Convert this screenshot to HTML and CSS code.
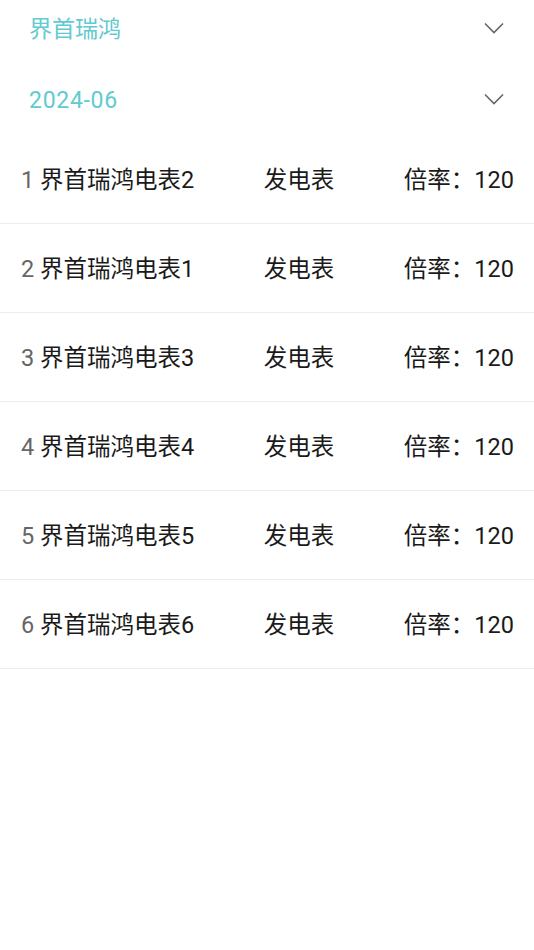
FILE: index.html
```html
<!DOCTYPE html>
<html lang="zh">
<head>
<meta charset="utf-8">
<link rel="stylesheet" href="styles.css">
</head>
<body>
<div class="page">
  <div class="filters">
    <div class="filter">
      <span class="filter-label">界首瑞鸿</span>
      <svg class="chev" width="20" height="12" viewBox="0 0 20 12"><path d="M1 1.5 L10 10.5 L19 1.5" fill="none" stroke="#666" stroke-width="1.6"/></svg>
    </div>
    <div class="filter">
      <span class="filter-label date">2024-06</span>
      <svg class="chev" width="20" height="12" viewBox="0 0 20 12"><path d="M1 1.5 L10 10.5 L19 1.5" fill="none" stroke="#666" stroke-width="1.6"/></svg>
    </div>
  </div>
  <ul class="list">
    <li class="row"><span class="name"><span class="idx">1</span> 界首瑞鸿电表2</span><span class="type">发电表</span><span class="rate">倍率：120</span></li>
    <li class="row"><span class="name"><span class="idx">2</span> 界首瑞鸿电表1</span><span class="type">发电表</span><span class="rate">倍率：120</span></li>
    <li class="row"><span class="name"><span class="idx">3</span> 界首瑞鸿电表3</span><span class="type">发电表</span><span class="rate">倍率：120</span></li>
    <li class="row"><span class="name"><span class="idx">4</span> 界首瑞鸿电表4</span><span class="type">发电表</span><span class="rate">倍率：120</span></li>
    <li class="row"><span class="name"><span class="idx">5</span> 界首瑞鸿电表5</span><span class="type">发电表</span><span class="rate">倍率：120</span></li>
    <li class="row"><span class="name"><span class="idx">6</span> 界首瑞鸿电表6</span><span class="type">发电表</span><span class="rate">倍率：120</span></li>
  </ul>
</div>
</body>
</html>
```
FILE: styles.css
```css
html, body {
  margin: 0;
  padding: 0;
  background: #fff;
}
body {
  font-family: Roboto, "Noto Sans CJK SC", sans-serif;
  color: #1a1a1a;
}
.page {
  width: 534px;
}
.filters {
  display: flex;
  flex-direction: column;
  gap: 15px;
}
.filter {
  box-sizing: border-box;
  height: 56px;
  display: flex;
  align-items: center;
  justify-content: space-between;
  padding: 0 30px 0 29px;
}
.filter-label {
  font-size: 23px;
  line-height: 30px;
  color: #62cad0;
  padding-top: 3px;
}
.date {
  letter-spacing: 0.7px;
}
.chev {
  display: block;
}
.list {
  list-style: none;
  margin: 8px 0 0 0;
  padding: 0;
}
.row {
  box-sizing: border-box;
  height: 89px;
  border-bottom: 1px solid #ececec;
  display: flex;
  align-items: center;
  justify-content: space-between;
  padding: 2px 20px 0 21px;
  font-size: 23.5px;
  line-height: 30px;
}
.idx {
  color: #666;
}
```
